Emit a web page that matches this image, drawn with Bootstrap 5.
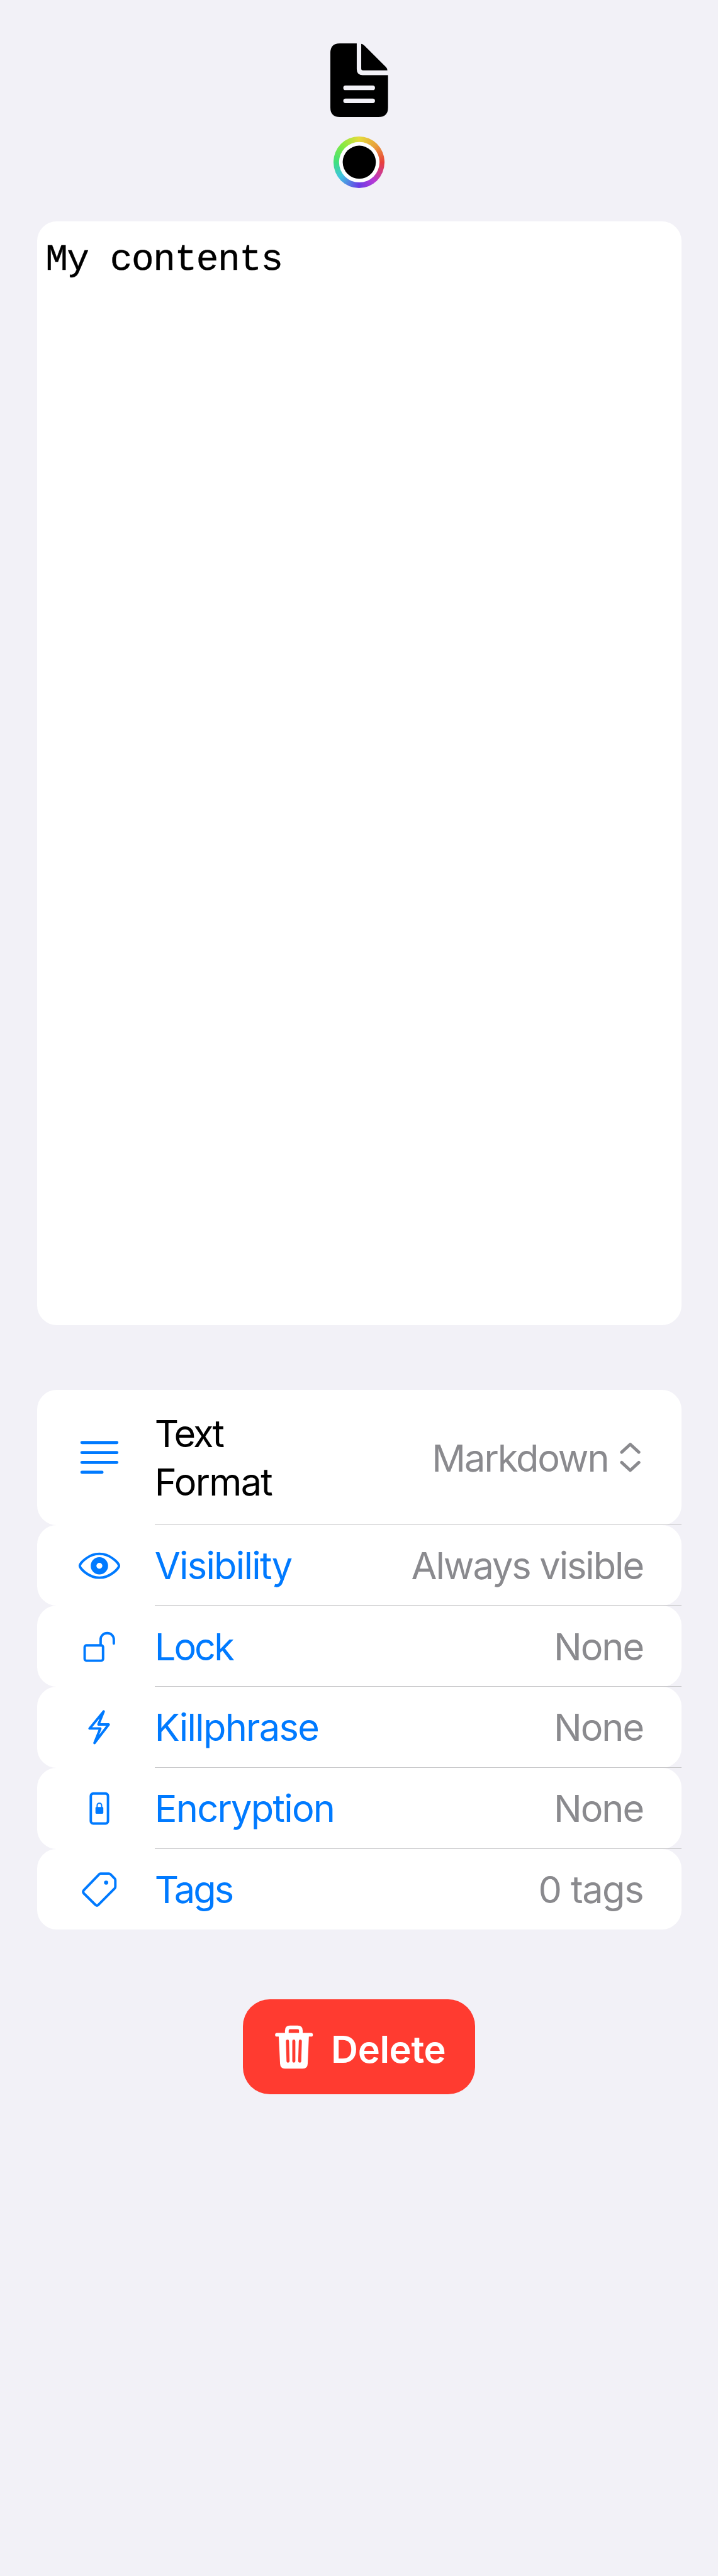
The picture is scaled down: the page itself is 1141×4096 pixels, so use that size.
<!DOCTYPE html>
<html lang="en">
<head>
<meta charset="utf-8">
<meta name="viewport" content="width=device-width, initial-scale=1">
<title>Edit note</title>
<link href="https://cdn.jsdelivr.net/npm/bootstrap@5.3.0/dist/css/bootstrap.min.css" rel="stylesheet">
<style>
html{font-size:9.75px}
body{background:#f2f1f7;color:#000;font-family:Inter,"Liberation Sans",sans-serif;font-size:6.1rem;line-height:7.8rem;min-height:420rem}
svg{display:block;flex:none;overflow:visible}
.page{padding:7.1rem 6rem 0}
.doc-icon{width:9.4rem;height:12rem}
.color-well{width:8.4rem;height:8.4rem;margin-top:3.2rem;border-radius:50%;background:conic-gradient(#e5dc3c,#e8a03c 45deg,#e83f3a 90deg,#b838d4 140deg,#6a3ce6 180deg,#3fc4e0 232deg,#3fe07e 270deg,#84ea42 315deg,#e5dc3c)}
.color-well svg{width:8.4rem;height:8.4rem}
.editor{margin-top:5.4rem;height:180rem;border:0;border-radius:3.2rem;resize:none;padding:2.5rem 1.4rem;font-family:"Liberation Mono",monospace;font-size:6.1rem;line-height:7.6rem;letter-spacing:-.15rem;color:#000;-webkit-text-stroke:.04rem #000}
.settings{margin-top:10.6rem}
.setting{height:13.2rem;padding:0 6.2rem 0 6rem;border:0;border-radius:3.2rem;background:#fff;color:#007aff;position:relative}
.setting.tall{height:22rem;color:#000}
.setting:not(:last-child)::after{content:"";position:absolute;left:19.2rem;right:0;bottom:0;height:1px;background:#c6c6c8}
.setting svg.ico{width:8.4rem;height:6.6rem;margin-right:4.8rem;stroke:#007aff;stroke-width:4;fill:none;stroke-linecap:round;stroke-linejoin:round}
.setting .name,.setting .val{letter-spacing:-.175rem}
.setting .val{color:#8a8a8e;letter-spacing:-.21rem}
.setting .name.tight{letter-spacing:-.3rem}
.setting .val.count{letter-spacing:-.15rem}
.fmt{width:24rem}
.chev{width:3.4rem;height:4.8rem;margin-left:1.9rem;margin-right:.4rem;fill:none;stroke:#8a8a8e;stroke-width:5;stroke-linecap:round;stroke-linejoin:round}
.del{margin-top:11.4rem;width:37.9rem;height:15.5rem;border:0;border-radius:4.4rem;background:#ff3b30;color:#fff;font-size:6.1rem;font-weight:600;line-height:7.8rem;letter-spacing:-.04rem;padding:0 0 0 5.3rem}
.del span{padding-top:.6rem}
.trash{width:6.2rem;height:7.2rem;margin-right:2.9rem}
</style>
<script src="https://cdn.jsdelivr.net/npm/bootstrap@5.3.0/dist/js/bootstrap.bundle.min.js"></script>
</head>
<body>
<main class="page d-flex flex-column align-items-center">
  <svg class="doc-icon" viewBox="0 0 94 120">
    <path d="M15.500 0H43V42Q43 51.700 52.500 51.700H94V104.500Q94 120 78.500 120H15.500Q0 120 0 104.500V15.500Q0 0 15.500 0Z"/>
    <path d="M50.300 .7Q53 1 55.500 3.500L90.500 38.500Q93 41 93 44H53.500Q50.300 44 50.300 41Z"/>
    <path d="M24.800 72.500H69M24.800 93.700H69" stroke="#f2f1f7" stroke-width="7.500" stroke-linecap="round"/>
  </svg>
  <div class="color-well">
    <svg viewBox="-42 -42 84 84"><circle r="33" fill="#fff"/><circle r="27"/></svg>
  </div>

  <textarea class="editor form-control" spellcheck="false">My contents</textarea>

  <div class="settings list-group w-100">
    <div class="setting tall d-flex align-items-center">
      <svg class="ico" viewBox="-42 -33 84 66"><path stroke-width="5" d="M-28.500-24H28.500M-28.500-7.700H28.500M-28.500 8.400H28.500M-28.500 24.500H4.300"/></svg>
      <span class="fmt name"><span class="name tight">Text</span><br>Format</span>
      <span class="val ms-auto">Markdown</span>
      <svg class="chev" viewBox="-17 -24 34 48"><path d="M-14-8.500L0-21.500 14-8.500M-14 8.200L0 21.200 14 8.200"/></svg>
    </div>
    <div class="setting d-flex align-items-center">
      <svg class="ico" viewBox="-42 -33 84 66"><path d="M-32 .5C-32-3.500-18-19 0-19S32-3.500 32 .5 18 20 0 20-32 4.500-32 .5Z"/><circle cy=".6" r="9.500" stroke-width="9.300"/></svg>
      <span class="name">Visibility</span><span class="val ms-auto">Always visible</span>
    </div>
    <div class="setting d-flex align-items-center">
      <svg class="ico" viewBox="-42 -33 84 66"><rect x="-24" y="-2" width="30" height="25" rx="3"/><path d="M2-2V-11.200C2-25.500 23.500-25.500 23.500-11.200V-5"/></svg>
      <span class="name tight">Lock</span><span class="val ms-auto">None</span>
    </div>
    <div class="setting d-flex align-items-center">
      <svg class="ico" viewBox="-42 -33 84 66"><path d="M7-25.500L-16 2.300H1.500L-8 26 15.200-4.300H-1.500Z"/></svg>
      <span class="name">Killphrase</span><span class="val ms-auto">None</span>
    </div>
    <div class="setting d-flex align-items-center">
      <svg class="ico" viewBox="-42 -33 84 66"><rect x="-14" y="-24" width="28" height="49" rx="4"/><rect x="-6.400" y="-2" width="12.800" height="11" rx="1.500" fill="#007aff" stroke="none"/><path stroke-width="2" d="M-3.700-1V-4C-3.700-9.600 3.700-9.600 3.700-4V-1"/></svg>
      <span class="name">Encryption</span><span class="val ms-auto">None</span>
    </div>
    <div class="setting d-flex align-items-center">
      <svg class="ico" viewBox="-42 -33 84 66"><path d="M2-25.700H15.500Q17-25.700 18-24.700L25-17.500Q26-16.500 26-15V-4Q26-2.500 25-1.500L-1.500 25.200Q-4 27.500-6.500 25.200L-25.500 6.500Q-27.500 4-25.500 1.500L0-25Q1-25.700 2-25.700Z"/><circle cx="11" cy="-11" r="3.400" fill="#007aff" stroke="none"/></svg>
      <span class="name tight">Tags</span><span class="val count ms-auto">0 tags</span>
    </div>
  </div>

  <button class="del btn btn-danger d-flex align-items-center" type="button">
    <svg class="trash" viewBox="-31 -36 62 72">
      <path d="M-27.800-20.200H27.800M-11.700-21V-27Q-11.700-32.300-6.500-32.300H6Q11.200-32.300 11.200-27V-21" fill="none" stroke="#fff" stroke-width="6" stroke-linecap="round"/>
      <path d="M-25-19H24.300L22.300 27Q22 35 14.500 35H-15Q-22.300 35-22.700 27Z" fill="#fff"/>
      <path d="M-10.700-9.800L-9.700 22.800M-.3-9.800V22.800M10.300-9.800L9.300 22.800" stroke="#ff3b30" stroke-width="5" stroke-linecap="round"/>
    </svg>
    <span>Delete</span>
  </button>
</main>
</body>
</html>
